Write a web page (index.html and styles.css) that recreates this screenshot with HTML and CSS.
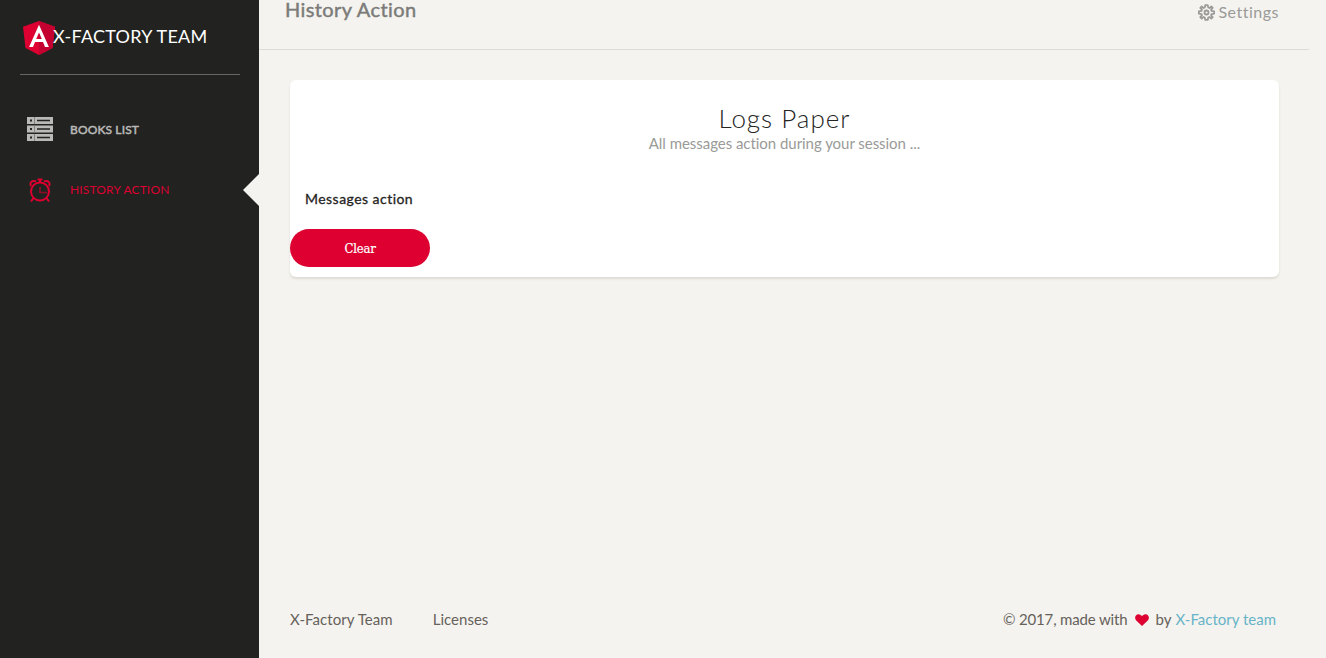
FILE: index.html
```html
<!DOCTYPE html>
<html lang="en">
<head>
<meta charset="utf-8">
<title>History Action</title>
<link rel="stylesheet" href="styles.css">
</head>
<body>
<div class="wrapper">
  <aside class="sidebar">
    <div class="brand">
      <svg class="brand-logo" viewBox="0 0 32 34"><path fill="#dd0031" d="M16 0 0 5.700 2.500 27 16 34 29.500 27 32 5.700Z"/><path fill="#c3002f" d="M16 0V34L29.500 27 32 5.700Z"/><path fill="#fff" d="M16 3.800 6.100 26h3.900l2-5h8l2 5h3.900ZM16 11.500 18.800 18h-5.600Z"/></svg>
      <span class="brand-name">X-FACTORY TEAM</span>
    </div>
    <nav class="menu">
      <a class="menu-item books">
        <svg class="menu-icon" viewBox="0 0 26 24"><path fill="#b9b9b7" d="M0 0H26V7H0ZM0 8.500H26V15.500H0ZM0 17H26V24H0Z"/><path stroke="#858583" d="M7.500 0V7M7.500 8.500V15.500M7.500 17V24"/><path fill="#222220" d="M3 2.500H5V4.500H3ZM3 11H5V13H3ZM3 19.500H5V21.500H3ZM10 2.700H23V4.300H10ZM10 11.200H23V12.800H10ZM10 19.700H23V21.300H10Z"/></svg>
        <span class="menu-text">BOOKS LIST</span>
      </a>
      <a class="menu-item active">
        <svg class="menu-icon" viewBox="0 0 26 24"><g fill="none" stroke="#dd0031" stroke-width="2"><circle cx="13" cy="13.500" r="9"/><path d="M4 8C2.300 4.500 5 2 9 3.500M22 8C23.700 4.500 21 2 17 3.500M6.500 20 4 23.500M19.500 20 22 23.500"/><path d="M10.500 1.500H15.500M13 1V5"/></g><path d="M13 9V14.500H20" fill="none" stroke="#8e0c28" stroke-width="1.700"/></svg>
        <span class="menu-text">HISTORY ACTION</span>
      </a>
    </nav>
  </aside>
  <div class="main">
    <header class="navbar">
      <h1 class="title">History Action</h1>
      <a class="settings">
        <svg class="gear" viewBox="0 0 16 16"><g fill="none" stroke="#9a9a98" stroke-width="1.700" stroke-linejoin="round"><path d="M6.900 1H9.100L9.700 3.300 10.900 3.800 12.700 2.400 13.800 3.600 12.300 5.400 12.700 6.400 15.200 6.900V9.100L12.700 9.600 12.300 10.600 13.800 12.400 12.500 13.700 10.900 12.200 9.700 12.700 9.100 15H6.900L6.300 12.700 5.100 12.200 3.500 13.700 2.200 12.400 3.700 10.600 3.300 9.600.800 9.100V6.900L3.300 6.400 3.700 5.400 2.200 3.600 3.500 2.300 5.100 3.800 6.300 3.300Z"/><circle cx="8" cy="8" r="1.900"/></g></svg>
        <span class="settings-text">Settings</span>
      </a>
    </header>
    <main class="content">
      <section class="card">
        <h2 class="card-title">Logs Paper</h2>
        <p class="card-sub">All messages action during your session ...</p>
        <div class="column-head">Messages action</div>
        <button class="clear">Clear</button>
      </section>
    </main>
    <footer class="footer">
      <nav class="links"><a class="team">X-Factory Team</a><a class="licenses">Licenses</a></nav>
      <div class="credit"><span class="made">© 2017, made with</span><svg class="heart" viewBox="0 0 14 12"><path fill="#dd0031" d="M7 12 1 6.300C-.7 4.500 0 .200 3.600.200 5.200.200 6.300 1.200 7 2.200 7.700 1.200 8.800.200 10.400.200 14 .200 14.700 4.500 13 6.300Z"/></svg><span class="by">by</span><a class="credit-link">X-Factory team</a></div>
    </footer>
  </div>
</div>
</body>
</html>
```
FILE: styles.css
```css
* { box-sizing: border-box; }
body { margin: 0; background: #f4f3ef; font-family: Muli, Lato, sans-serif; font-size: 15px; color: #66615b; overflow: hidden; font-variant-ligatures: none; }
h1, h2, p { margin: 0; }
a, span, h1, h2, p, .column-head { white-space: nowrap; }
.wrapper { display: flex; height: 658px; }
.sidebar { width: 259px; background: #222220; flex: none; padding: 0 19px 0 20px; }
.brand { height: 75px; border-bottom: 1px solid #666664; display: flex; align-items: center; padding-left: 3px; }
.brand-logo { width: 32px; height: 34px; margin-top: 1px; }
.brand-name { color: #fff; font-size: 18px; letter-spacing: .27px; margin: -2px 0 0 -2px; }
.menu { padding-top: 25px; }
.menu-item { height: 60px; display: flex; align-items: center; padding-left: 7px; position: relative; color: #b9b9b7; font-size: 12px; }
.menu-icon { width: 26px; height: 24px; margin: -2px 17px 0 0; }
.menu-text { margin-top: -2px; }
.books { -webkit-text-stroke: .5px; letter-spacing: .14px; }
.active { color: #dd0031; letter-spacing: .15px; }
.active .menu-icon { margin-top: 0; }
.active::after { content: ""; position: absolute; right: -19px; top: 14px; border: 16px solid transparent; border-left: 0; border-right-color: #f4f3ef; }
.main { flex: 1; display: flex; flex-direction: column; }
.navbar { height: 50px; width: 1050px; border-bottom: 1px solid #dddcd8; display: flex; justify-content: space-between; padding: 0 30px 0 26px; }
.title { font-size: 20px; line-height: 24px; font-weight: 400; -webkit-text-stroke: .45px; letter-spacing: .4px; color: #7b7b79; margin-top: -3px; }
.settings { display: flex; height: 24px; align-items: center; color: #9a9a98; font-size: 16px; }
.settings-text { margin-top: -1px; letter-spacing: .5px; }
.gear { width: 17px; height: 17px; margin-right: 3px; }
.content { flex: 1; padding: 30px 47px 0 31px; }
.card { height: 197px; background: #fff; border-radius: 6px; box-shadow: 0 2px 2px rgba(204,197,185,.5); padding-top: 22px; }
.card-title { text-align: center; font-size: 26px; line-height: 32px; font-weight: 300; letter-spacing: 1px; color: #252422; }
.card-sub { text-align: center; font-size: 15px; line-height: 20px; letter-spacing: -.04px; color: #9a9a98; margin-top: -1px; }
.column-head { margin: 36px 0 0 15px; font-size: 14px; line-height: 20px; -webkit-text-stroke: .3px; letter-spacing: .46px; color: #252422; }
.clear { display: block; margin-top: 20px; width: 140px; height: 38px; border: 0; border-radius: 19px; background: #dd0031; color: #fff; font: 13px "DejaVu Serif Condensed", "DejaVu Serif", serif; font-stretch: condensed; letter-spacing: -.2px; -webkit-text-stroke: .2px; }
.footer { height: 76px; display: flex; justify-content: space-between; padding: 27px 50px 0 31px; line-height: 20px; }
.team { letter-spacing: .07px; }
.links { display: flex; gap: 40px; }
.credit { display: flex; }
.made { letter-spacing: -.15px; }
.heart { width: 14px; height: 12px; margin: 5px 7px 0 7px; }
.credit-link { color: #68b3c8; margin-left: 4px; }
```
